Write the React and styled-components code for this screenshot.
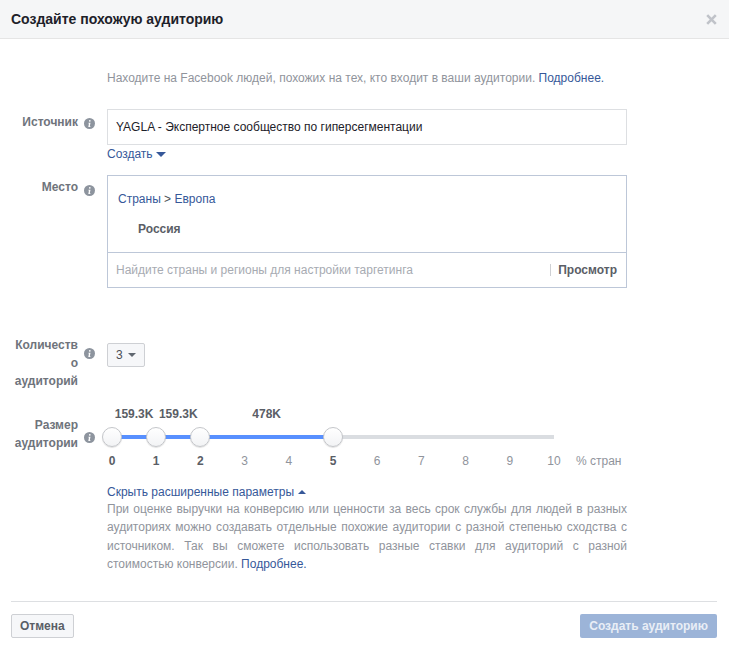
import React from 'react';
import styled, { createGlobalStyle } from 'styled-components';

const GlobalStyle = createGlobalStyle`
  html, body {
    margin: 0;
    padding: 0;
    background: #fff;
    font-family: "Liberation Sans", Arial, sans-serif;
  }
`;

const Dialog = styled.div`
  width: 729px;
  height: 650px;
  display: flex;
  flex-direction: column;
  overflow: hidden;
`;

const Header = styled.div`
  height: 38px;
  flex: none;
  display: flex;
  align-items: center;
  justify-content: space-between;
  padding: 0 12px 0 11px;
  background: #f5f6f7;
  border-bottom: 1px solid #e5e5e5;
`;

const Title = styled.div`
  font-size: 14px;
  font-weight: bold;
  color: #1d2129;
`;

const Close = styled.svg`
  width: 11px;
  height: 11px;
  display: block;
`;

const Body = styled.div`
  flex: 1;
  padding-top: 31px;
`;

const Intro = styled.div`
  margin-left: 107px;
  font-size: 12px;
  line-height: 16px;
  color: #90949c;
`;

const Link = styled.a`
  color: #365899;
`;

const Row = styled.div`
  display: flex;
  margin-top: ${(p) => p.$top}px;
`;

const LabelCell = styled.div`
  width: 95px;
  flex: none;
  display: flex;
  justify-content: flex-end;
  align-items: flex-start;
  gap: 6px;
  box-sizing: border-box;
  padding-top: ${(p) => p.$pad || 0}px;
`;

const Label = styled.div`
  width: 68px;
  text-align: right;
  font-size: 12px;
  font-weight: bold;
  line-height: 18px;
  color: #6f747c;
  overflow-wrap: anywhere;
`;

const Info = styled.svg`
  width: 11px;
  height: 11px;
  flex: none;
  margin-top: ${(p) => p.$top || 0}px;
`;

const Content = styled.div`
  margin-left: 12px;
  width: 520px;
`;

const SourceInput = styled.div`
  height: 36px;
  box-sizing: border-box;
  border: 1px solid #dddfe2;
  padding: 0 8px;
  display: flex;
  align-items: center;
  font-size: 12px;
  color: #1d2129;
`;

const CreateLink = styled.div`
  margin-top: 1px;
  height: 16px;
  display: flex;
  align-items: center;
  gap: 3px;
  font-size: 12px;
  color: #365899;
`;

const Caret = styled.span`
  width: 0;
  height: 0;
  border-left: ${(p) => p.$size}px solid transparent;
  border-right: ${(p) => p.$size}px solid transparent;
  ${(p) => (p.$up ? 'border-bottom' : 'border-top')}: ${(p) => p.$h}px solid ${(p) => p.$color};
`;

const PlaceBox = styled.div`
  border: 1px solid #bdc7d8;
`;

const PlaceList = styled.div`
  height: 77px;
  box-sizing: border-box;
  border-bottom: 1px solid #bdc7d8;
  padding: 15px 0 0 10px;
`;

const Crumbs = styled.div`
  font-size: 12px;
  line-height: 16px;
  color: #365899;
`;

const CrumbSep = styled.span`
  color: #4b4f56;
`;

const Country = styled.div`
  margin: 14px 0 0 20px;
  font-size: 12px;
  font-weight: bold;
  line-height: 16px;
  color: #5a5e66;
`;

const SearchRow = styled.div`
  height: 34px;
  display: flex;
  align-items: center;
  padding: 0 9px 0 8px;
  font-size: 12px;
`;

const Placeholder = styled.div`
  flex: 1;
  color: #a7abb2;
`;

const Browse = styled.div`
  border-left: 1px solid #ced0d4;
  padding-left: 7px;
  line-height: 12px;
  font-weight: bold;
  color: #5a5e66;
`;

const SelectButton = styled.div`
  margin-top: 7px;
  width: 38px;
  height: 24px;
  box-sizing: border-box;
  border: 1px solid #ced0d4;
  border-radius: 2px;
  background: #f6f7f9;
  display: flex;
  align-items: center;
  padding-left: 8px;
  gap: 5px;
  font-size: 12px;
  color: #4b4f56;
`;

const SliderArea = styled.div`
  position: relative;
  height: 68px;
  width: 520px;
`;

const Track = styled.div`
  position: absolute;
  left: 5px;
  top: 28px;
  width: 442px;
  height: 4px;
  background: #dadde1;
`;

const TrackFill = styled.div`
  height: 100%;
  background: #5890ff;
`;

const Thumb = styled.div`
  position: absolute;
  top: 20px;
  width: 20px;
  height: 20px;
  box-sizing: border-box;
  margin-left: -10px;
  border-radius: 50%;
  background: linear-gradient(#fff, #f2f3f5);
  border: 1px solid #c4c6ca;
  box-shadow: 0 1px 1px rgba(0, 0, 0, 0.12);
`;

const Value = styled.div`
  position: absolute;
  top: 0;
  transform: translateX(-50%);
  font-size: 12px;
  font-weight: bold;
  line-height: 14px;
  color: #5a5e66;
`;

const Tick = styled.div`
  position: absolute;
  top: 47px;
  transform: translateX(-50%);
  font-size: 12px;
  line-height: 14px;
  font-weight: ${(p) => (p.$on ? 'bold' : 'normal')};
  color: ${(p) => (p.$on ? '#5a5e66' : '#90949c')};
`;

const Unit = styled.div`
  position: absolute;
  left: 469px;
  top: 47px;
  font-size: 12px;
  line-height: 14px;
  color: #90949c;
`;

const Advanced = styled.div`
  margin: 9px 0 0 107px;
  height: 15px;
  display: flex;
  align-items: center;
  gap: 4px;
  font-size: 12px;
  color: #365899;
`;

const Note = styled.div`
  margin: 1px 0 0 107px;
  width: 520px;
  font-size: 12px;
  line-height: 18.4px;
  color: #90949c;
  text-align: justify;
`;

const Footer = styled.div`
  flex: none;
  margin: 0 12px 0 11px;
  height: 49px;
  box-sizing: border-box;
  border-top: 1px solid #dddfe2;
  display: flex;
  align-items: flex-start;
  justify-content: space-between;
  padding-top: 12px;
`;

const CancelButton = styled.div`
  height: 24px;
  box-sizing: border-box;
  padding: 0 8px;
  display: flex;
  align-items: center;
  border: 1px solid #ced0d4;
  border-radius: 2px;
  background: #f6f7f9;
  font-size: 12px;
  font-weight: bold;
  color: #5a5e66;
`;

const SubmitButton = styled.div`
  height: 24px;
  box-sizing: border-box;
  padding: 0 9px;
  display: flex;
  align-items: center;
  border-radius: 2px;
  background: #9cb4d8;
  font-size: 12px;
  font-weight: bold;
  color: #e9eef6;
`;

const InfoIcon = ({ top }) => (
  <Info $top={top} viewBox="0 0 12 12">
    <circle cx="6" cy="6" r="6" fill="#8d949e" />
    <path d="M6.4 2.2a.9.9 0 1 1-.1 1.8.9.9 0 0 1 .1-1.8zM4.9 5.2h2.2L6.3 9h.8l-.2.8H4.7L5.4 6h-.7z" fill="#fff" />
  </Info>
);

const STEP = 44.2;
const START = 5;
const TICKS = [0, 1, 2, 3, 4, 5, 6, 7, 8, 9, 10];
const ACTIVE = [0, 1, 2, 5];
const VALUES = ['159.3K', '159.3K', '478K'];
const pos = (n) => START + STEP * n;

function App() {
  return (
    <Dialog>
      <GlobalStyle />
      <Header>
        <Title>Создайте похожую аудиторию</Title>
        <Close viewBox="0 0 11 11">
          <path d="M1.2 1.2l8.6 8.6M9.8 1.2l-8.6 8.6" stroke="#c0c3c9" strokeWidth="2.6" />
        </Close>
      </Header>
      <Body>
        <Intro>
          Находите на Facebook людей, похожих на тех, кто входит в ваши аудитории. <Link>Подробнее.</Link>
        </Intro>

        <Row $top={23}>
          <LabelCell $pad={4}>
            <Label>Источник</Label>
            <InfoIcon top={5} />
          </LabelCell>
          <Content>
            <SourceInput>YAGLA - Экспертное сообщество по гиперсегментации</SourceInput>
            <CreateLink>
              Создать <Caret $size={5.5} $h={5} $color="#365899" />
            </CreateLink>
          </Content>
        </Row>

        <Row $top={13}>
          <LabelCell $pad={3}>
            <Label>Место</Label>
            <InfoIcon top={7} />
          </LabelCell>
          <Content>
            <PlaceBox>
              <PlaceList>
                <Crumbs>
                  Страны <CrumbSep>&gt;</CrumbSep> Европа
                </Crumbs>
                <Country>Россия</Country>
              </PlaceList>
              <SearchRow>
                <Placeholder>Найдите страны и регионы для настройки таргетинга</Placeholder>
                <Browse>Просмотр</Browse>
              </SearchRow>
            </PlaceBox>
          </Content>
        </Row>

        <Row $top={48}>
          <LabelCell>
            <Label>Количество аудиторий</Label>
            <InfoIcon top={12} />
          </LabelCell>
          <Content>
            <SelectButton>
              3 <Caret $size={4.5} $h={4} $color="#606770" />
            </SelectButton>
          </Content>
        </Row>

        <Row $top={17}>
          <LabelCell $pad={9}>
            <Label>Размер аудитории</Label>
            <InfoIcon top={16} />
          </LabelCell>
          <Content>
            <SliderArea>
              <Track>
                <TrackFill style={{ width: STEP * 5 }} />
              </Track>
              {ACTIVE.map((n) => (
                <Thumb key={n} style={{ left: pos(n) }} />
              ))}
              {VALUES.map((text, i) => (
                <Value key={i} style={{ left: (pos(ACTIVE[i]) + pos(ACTIVE[i + 1])) / 2 }}>
                  {text}
                </Value>
              ))}
              {TICKS.map((n) => (
                <Tick key={n} $on={ACTIVE.includes(n)} style={{ left: pos(n) }}>
                  {n}
                </Tick>
              ))}
              <Unit>% стран</Unit>
            </SliderArea>
          </Content>
        </Row>

        <Advanced>
          Скрыть расширенные параметры <Caret $up $size={4} $h={4} $color="#365899" />
        </Advanced>
        <Note>
          При оценке выручки на конверсию или ценности за весь срок службы для людей в разных аудиториях можно
          создавать отдельные похожие аудитории с разной степенью сходства с источником. Так вы сможете использовать
          разные ставки для аудиторий с разной стоимостью конверсии. <Link>Подробнее.</Link>
        </Note>
      </Body>
      <Footer>
        <CancelButton>Отмена</CancelButton>
        <SubmitButton>Создать аудиторию</SubmitButton>
      </Footer>
    </Dialog>
  );
}

export default App;
